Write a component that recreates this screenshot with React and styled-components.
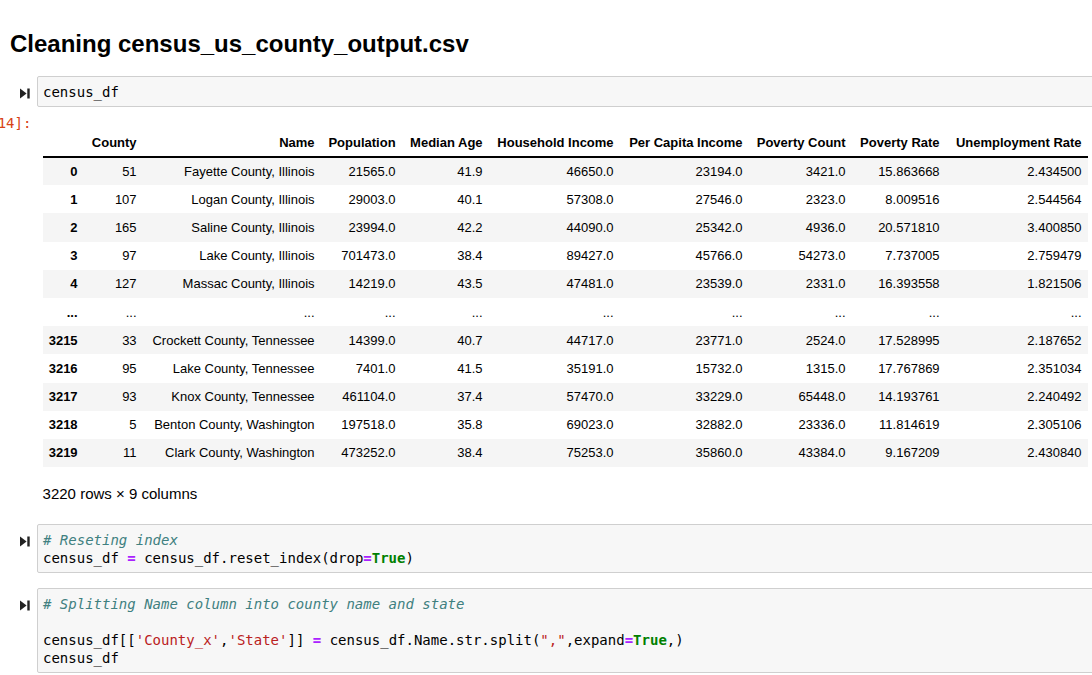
import React from 'react';
import styled, { createGlobalStyle } from 'styled-components';

const GlobalStyle = createGlobalStyle`
html, body {
  margin: 0;
  padding: 0;
  background: #fff;
  overflow: hidden;
}
body {
  font-family: "Liberation Sans", Arial, sans-serif;
  color: #000;
}
`;

const Page = styled.div`
width: 1100px;
padding-top: 30px;
`;

const Heading = styled.h2`
margin: 0 0 18px 0;
padding-left: 10px;
font-size: 24px;
line-height: 28px;
font-weight: bold;
`;

const Cell = styled.div`
display: flex;
margin-top: ${(p) => p.$gap || 0}px;
`;

const Prompt = styled.div`
flex: 0 0 37px;
width: 37px;
min-width: 0;
box-sizing: border-box;
display: flex;
justify-content: flex-end;
padding: 12px 7px 0 0;
`;

const OutPrompt = styled.div`
flex: 0 0 37px;
width: 37px;
min-width: 0;
box-sizing: border-box;
display: flex;
justify-content: flex-end;
align-items: flex-start;
padding: 2px 5.6px 0 0;
white-space: nowrap;
font-family: "DejaVu Sans Mono", monospace;
font-size: 14px;
line-height: 17px;
color: #d84315;
`;

const Input = styled.pre`
flex: 1;
margin: 0;
padding: 6px 5px 5px 5px;
background: #f7f7f7;
border: 1px solid #cfcfcf;
border-radius: 2px;
font-family: "DejaVu Sans Mono", monospace;
font-size: 14px;
line-height: 18px;
color: #000;
`;

const Comment = styled.span`
color: #408080;
font-style: italic;
`;

const Op = styled.span`
color: #aa22ff;
font-weight: bold;
`;

const Kw = styled.span`
color: #008000;
font-weight: bold;
`;

const Str = styled.span`
color: #ba2121;
`;

const Output = styled.div`
flex: 1;
min-width: 0;
padding: 16px 5.6px 21px 5.6px;
`;

const Table = styled.table`
border-collapse: collapse;
border-spacing: 0;
table-layout: fixed;
width: 1045px;
font-size: 13px;
color: #000;
`;

const Th = styled.th`
width: ${(p) => p.$w}px;
box-sizing: border-box;
height: 28px;
padding: 0 6px;
text-align: right;
font-weight: bold;
white-space: nowrap;
border-bottom: 2px solid #000;
vertical-align: middle;
`;

const Row = styled.tr`
height: 28.2px;
background: ${(p) => (p.$striped ? '#f5f5f5' : '#fff')};
`;

const Td = styled.td`
padding: 0 6px;
text-align: right;
white-space: nowrap;
vertical-align: middle;
line-height: 13px;
font-weight: ${(p) => (p.$index ? 'bold' : 'normal')};
`;

const Summary = styled.p`
margin: 18px 0 0 0;
font-size: 15px;
line-height: 18px;
`;

const RunIcon = () => (
  <svg width="10" height="11" viewBox="0 0 10 11">
    <path d="M0 0.5 L6.6 5.5 L0 10.5 Z" fill="#222" />
    <rect x="7.3" y="0.5" width="2.4" height="10" fill="#222" />
  </svg>
);

const columns = [
  { label: '', w: 41 },
  { label: 'County', w: 59 },
  { label: 'Name', w: 178 },
  { label: 'Population', w: 81 },
  { label: 'Median Age', w: 87 },
  { label: 'Household Income', w: 131 },
  { label: 'Per Capita Income', w: 129 },
  { label: 'Poverty Count', w: 103 },
  { label: 'Poverty Rate', w: 94 },
  { label: 'Unemployment Rate', w: 142 },
];

const rows = [
  ['0', '51', 'Fayette County, Illinois', '21565.0', '41.9', '46650.0', '23194.0', '3421.0', '15.863668', '2.434500'],
  ['1', '107', 'Logan County, Illinois', '29003.0', '40.1', '57308.0', '27546.0', '2323.0', '8.009516', '2.544564'],
  ['2', '165', 'Saline County, Illinois', '23994.0', '42.2', '44090.0', '25342.0', '4936.0', '20.571810', '3.400850'],
  ['3', '97', 'Lake County, Illinois', '701473.0', '38.4', '89427.0', '45766.0', '54273.0', '7.737005', '2.759479'],
  ['4', '127', 'Massac County, Illinois', '14219.0', '43.5', '47481.0', '23539.0', '2331.0', '16.393558', '1.821506'],
  ['...', '...', '...', '...', '...', '...', '...', '...', '...', '...'],
  ['3215', '33', 'Crockett County, Tennessee', '14399.0', '40.7', '44717.0', '23771.0', '2524.0', '17.528995', '2.187652'],
  ['3216', '95', 'Lake County, Tennessee', '7401.0', '41.5', '35191.0', '15732.0', '1315.0', '17.767869', '2.351034'],
  ['3217', '93', 'Knox County, Tennessee', '461104.0', '37.4', '57470.0', '33229.0', '65448.0', '14.193761', '2.240492'],
  ['3218', '5', 'Benton County, Washington', '197518.0', '35.8', '69023.0', '32882.0', '23336.0', '11.814619', '2.305106'],
  ['3219', '11', 'Clark County, Washington', '473252.0', '38.4', '75253.0', '35860.0', '43384.0', '9.167209', '2.430840'],
];

const App = () => (
  <Page>
    <GlobalStyle />
    <Heading>Cleaning census_us_county_output.csv</Heading>

    <Cell>
      <Prompt><RunIcon /></Prompt>
      <Input>census_df</Input>
    </Cell>
    <Cell $gap={6}>
      <OutPrompt><span>Out[14]:</span></OutPrompt>
      <Output>
        <Table>
          <thead>
            <tr>
              {columns.map((c, i) => (
                <Th key={i} $w={c.w}>{c.label}</Th>
              ))}
            </tr>
          </thead>
          <tbody>
            {rows.map((r, i) => (
              <Row key={i} $striped={i % 2 === 0}>
                {r.map((v, j) => (
                  <Td key={j} $index={j === 0}>{v}</Td>
                ))}
              </Row>
            ))}
          </tbody>
        </Table>
        <Summary>3220 rows × 9 columns</Summary>
      </Output>
    </Cell>

    <Cell>
      <Prompt><RunIcon /></Prompt>
      <Input>
        <Comment># Reseting index</Comment>{'\n'}
        census_df <Op>=</Op> census_df.reset_index(drop<Op>=</Op><Kw>True</Kw>)
      </Input>
    </Cell>

    <Cell $gap={15}>
      <Prompt><RunIcon /></Prompt>
      <Input>
        <Comment># Splitting Name column into county name and state</Comment>{'\n\n'}
        census_df[[<Str>'County_x'</Str>,<Str>'State'</Str>]] <Op>=</Op> census_df.Name.str.split(<Str>","</Str>,expand<Op>=</Op><Kw>True</Kw>,){'\n'}
        census_df
      </Input>
    </Cell>
  </Page>
);

export default App;
